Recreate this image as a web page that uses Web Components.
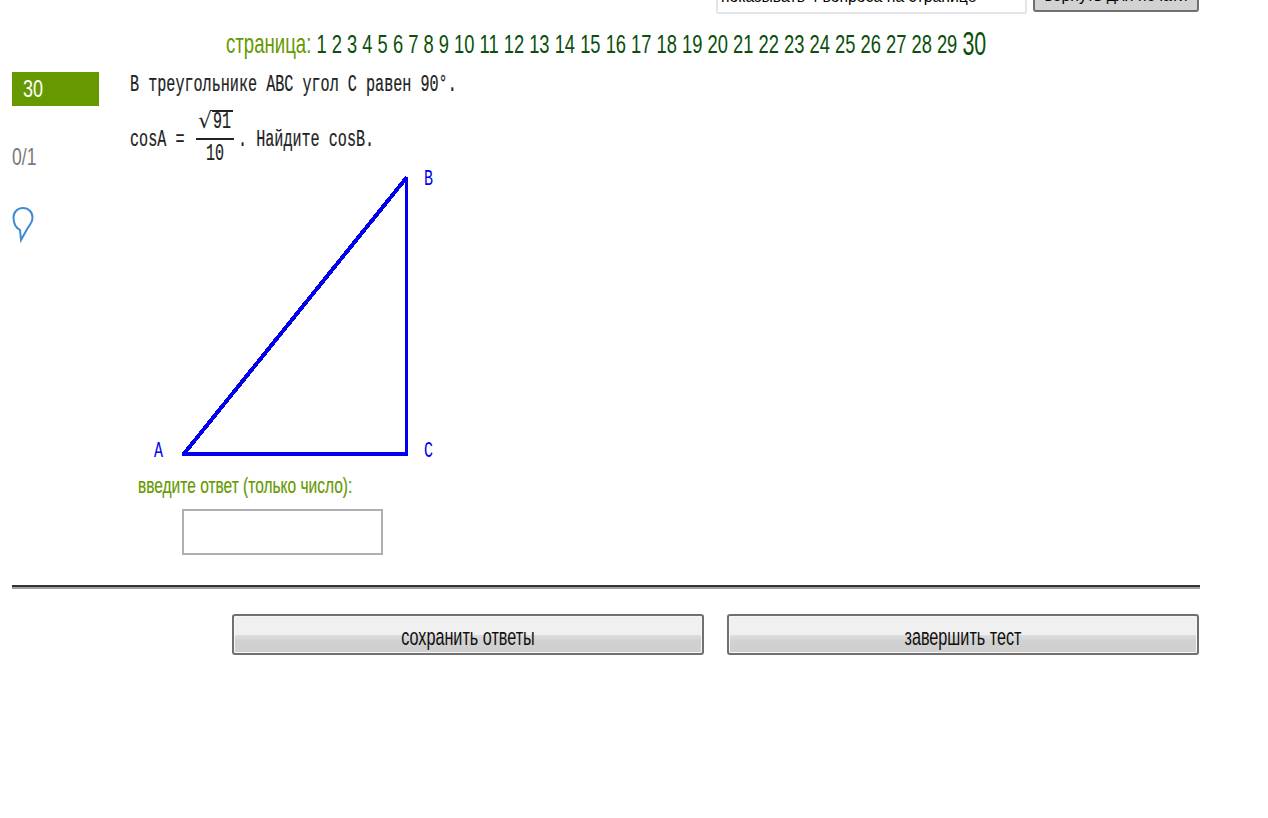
<!DOCTYPE html>
<html lang="ru">
<head>
<meta charset="utf-8">
<title>тест</title>
<style>
html, body { margin: 0; background: #fff; overflow: hidden; }
body { font-family: "Liberation Sans", Arial, sans-serif; width: 1268px; height: 818px; }
</style>
</head>
<body>
<test-toolbar>
  <span slot="field">показывать 4 вопроса на странице</span>
  <span slot="action">вернуть для печати</span>
</test-toolbar>
<test-pager current="30" total="30"></test-pager>
<test-row>
  <test-side slot="side" number="30" score="0/1"></test-side>
  <test-question>
    <tall-text>В треугольнике АВС угол С равен 90°.</tall-text>
    <math-line slot="formula"></math-line>
    <tri-figure slot="figure"></tri-figure>
    <answer-box slot="answer">введите ответ (только число):</answer-box>
  </test-question>
</test-row>
<test-footer>
  <test-button style="width:472px">сохранить ответы</test-button>
  <test-button style="width:472px">завершить тест</test-button>
</test-footer>

<script>
function shadow(el, html) {
    el.attachShadow({ mode: "open" }).innerHTML = html;
    return el.shadowRoot;
}

// the reference is stretched vertically, so text is drawn narrow and scaled up
class TallText extends HTMLElement {
    constructor() {
        super();
        shadow(this, `<style>
:host { display: inline-block; transform: scaleY(var(--sy, 1.5)); white-space: nowrap; }
</style><slot></slot>`);
    }
}

class TestToolbar extends HTMLElement {
    constructor() {
        super();
        shadow(this, `<style>
:host { display: flex; height: 14px; width: 1199px; justify-content: flex-end; align-items: flex-end; gap: 6px; overflow: hidden; font-size: 15.8px; color: #000; }
.field, .action { flex: none; box-sizing: border-box; display: flex; align-items: flex-end; justify-content: center; white-space: nowrap; }
.field { width: 311px; background: #fff; border: 2px solid #e2e6ec; border-radius: 2px; padding: 0 0 6px 3px; justify-content: flex-start; height: 32px; }
.action { width: 166px; margin-bottom: 2px; background: #d2d2d2; border: 2px solid #707070; border-top: 0; border-radius: 3px; padding-bottom: 5px; height: 28px; }
</style>
<div class="field"><slot name="field"></slot></div>
<div class="action"><slot name="action"></slot></div>`);
    }
}

class TestPager extends HTMLElement {
    connectedCallback() {
        const total = Number(this.getAttribute("total"));
        const current = Number(this.getAttribute("current"));
        let links = "";
        for (let i = 1; i <= total; i++) {
            links += i === current ? `<b>${i}</b>` : `<a>${i}</a> `;
        }
        shadow(this, `<style>
:host { display: block; box-sizing: border-box; height: 58px; padding: 19px 0 0 226px; line-height: 20px; font-size: 18.33px; white-space: nowrap; --sy: 1.44; }
.label { color: #669900; font-size: 18.6px; }
a { color: #0b4f0b; }
b { color: #0b4f0b; font-weight: normal; font-size: 21.4px; display: inline-block; transform: translateY(0.5px) scaleY(1.1); }
</style>
<tall-text><span class="label">страница:</span> ${links}</tall-text>`);
    }
}

class TestRow extends HTMLElement {
    constructor() {
        super();
        shadow(this, `<style>
:host { display: grid; grid-template-columns: 118px 1fr; padding-left: 12px; height: 513px; }
</style><slot name="side"></slot><div><slot></slot></div>`);
    }
}

class TestSide extends HTMLElement {
    connectedCallback() {
        shadow(this, `<style>
:host { display: flex; flex-direction: column; align-items: flex-start; }
.num { box-sizing: border-box; width: 87px; height: 34px; background: #669900; color: #fff; padding-left: 11px; font-size: 18px; line-height: 34px; --sy: 1.35; }
.score { margin-top: 41px; height: 20px; line-height: 20px; color: #7a7a7a; font-size: 17.6px; --sy: 1.4; }
svg { margin-top: 40px; display: block; }
</style>
<div class="num"><tall-text>${this.getAttribute("number")}</tall-text></div>
<div class="score"><tall-text>${this.getAttribute("score")}</tall-text></div>
<svg width="24" height="36" viewBox="0 0 24 36" fill="none" stroke="#3f8ad4" stroke-width="2">
  <path d="M8 23 C3.5 20.5 1.5 15.5 1.5 10.5 C1.5 5 5.5 1 11 1 C16.5 1 20.5 5 20.5 10.5 C20.5 15 18 18 16 20.5 L9 33 Z"/>
</svg>`);
    }
}

class TestQuestion extends HTMLElement {
    constructor() {
        super();
        shadow(this, `<style>
:host { display: block; font-family: "Liberation Mono", "Courier New", monospace; font-size: 15.13px; color: #222; --sy: 1.6; -webkit-text-stroke: 0.15px #222; }
.line { height: 26px; line-height: 26px; }
.formula { margin-top: 11px; height: 56px; }
</style>
<div class="line"><slot></slot></div>
<div class="formula"><slot name="formula"></slot></div>
<slot name="figure"></slot>
<slot name="answer"></slot>`);
    }
}

class MathLine extends HTMLElement {
    constructor() {
        super();
        shadow(this, `<style>
:host { display: flex; align-items: flex-start; height: 56px; }
.t { line-height: 18px; margin-top: 22px; width: 66px; }
.frac { width: 38px; height: 56px; display: flex; flex-direction: column; align-items: center; }
.num { height: 31px; width: 38px; box-sizing: border-box; display: flex; justify-content: flex-end; align-items: flex-start; padding-right: 1px; border-bottom: 2px solid #222; }
.root { height: 22px; width: 21px; box-sizing: border-box; margin-top: 1px; padding: 2px 0 0 1px; border-top: 2px solid #222; line-height: 18px; font-size: 15px; }
.radical { font-family: "DejaVu Sans", sans-serif; font-size: 22px; line-height: 24px; -webkit-text-stroke: 0; }
.den { line-height: 18px; margin-top: 6px; font-size: 15px; }
.after { margin-left: 4px; margin-top: 22px; line-height: 18px; }
</style>
<div class="t"><tall-text>cosA =</tall-text></div>
<div class="frac">
  <div class="num"><span class="radical">√</span><span class="root"><tall-text>91</tall-text></span></div>
  <div class="den"><tall-text>10</tall-text></div>
</div>
<div class="after"><tall-text>. Найдите cosB.</tall-text></div>`);
    }
}

class TriFigure extends HTMLElement {
    constructor() {
        super();
        shadow(this, `<style>
:host { display: block; height: 310px; }
svg { display: block; }
text { font-family: "Liberation Mono", monospace; font-size: 15px; fill: #0000ee; -webkit-text-stroke: 0; stroke: none; }
</style>
<svg width="330" height="310" viewBox="130 165 330 310">
  <g fill="none" stroke="#0000ee" shape-rendering="crispEdges">
    <path stroke-width="4" d="M183 455 L407 177"/>
    <path stroke-width="3" d="M406.5 177 V455"/>
    <path stroke-width="4" d="M182 454 H408"/>
  </g>
  <text transform="translate(424 185) scale(1 1.5)">B</text>
  <text transform="translate(424 457) scale(1 1.5)">C</text>
  <text transform="translate(154 457) scale(1 1.5)">A</text>
</svg>`);
    }
}

class AnswerBox extends HTMLElement {
    constructor() {
        super();
        shadow(this, `<style>
:host { display: block; font-family: "Liberation Sans", Arial, sans-serif; font-size: 15.5px; color: #669900; --sy: 1.46; -webkit-text-stroke: 0.15px #669900; }
.label { padding-left: 8px; height: 34px; line-height: 22px; box-sizing: border-box; }
input { display: block; box-sizing: border-box; margin-left: 52px; width: 201px; height: 46px; border: 2px solid #aeaeb4; background: #fff; padding: 0; outline: none; }
</style>
<div class="label"><tall-text><slot></slot></tall-text></div>
<input type="text">`);
    }
}

class TestFooter extends HTMLElement {
    constructor() {
        super();
        shadow(this, `<style>
:host { display: block; width: 1188px; margin-left: 12px; }
.rule { height: 4px; box-sizing: border-box; border-top: 2px solid #333; border-bottom: 2px solid #a0a0a0; }
.buttons { margin-top: 25px; display: flex; justify-content: flex-end; gap: 23px; padding-right: 1px; }
</style>
<div class="rule"></div>
<div class="buttons"><slot></slot></div>`);
    }
}

class TestButton extends HTMLElement {
    constructor() {
        super();
        shadow(this, `<style>
:host { display: flex; box-sizing: border-box; height: 41px; padding-top: 4px; align-items: center; justify-content: center; border: 2px solid #707070; border-radius: 3px; box-shadow: inset 0 0 0 1px #f7f7f7; background: linear-gradient(#f0f0f0 0 50%, #dedede 50%, #d0d0d0 70%, #d0d0d0 100%); color: #111; font-size: 16.2px; --sy: 1.5; cursor: default; }
</style><tall-text><slot></slot></tall-text>`);
    }
}

customElements.define("tall-text", TallText);
customElements.define("test-toolbar", TestToolbar);
customElements.define("test-pager", TestPager);
customElements.define("test-row", TestRow);
customElements.define("test-side", TestSide);
customElements.define("test-question", TestQuestion);
customElements.define("math-line", MathLine);
customElements.define("tri-figure", TriFigure);
customElements.define("answer-box", AnswerBox);
customElements.define("test-footer", TestFooter);
customElements.define("test-button", TestButton);
</script>
</body>
</html>
